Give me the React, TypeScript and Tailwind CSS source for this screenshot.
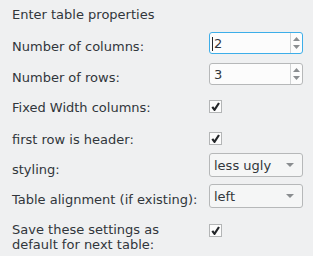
import React from "react";

function Check() {
  return (
    <div className="w-[13px] h-[13px] border border-[#b3b5b6] bg-[#fcfcfc] flex items-center justify-center">
      <svg width="9" height="9" viewBox="0 0 9 9">
        <path d="M1.3 4.8 L3.5 7.8 L8 1" stroke="#232629" strokeWidth="2.2" fill="none" strokeLinejoin="miter" />
      </svg>
    </div>
  );
}

function Spin({ value, focused }: { value: string; focused?: boolean }) {
  return (
    <div
      className={`w-[94px] h-[22px] rounded-[3px] border bg-[#fcfcfc] flex ${
        focused ? "border-[#3daee9]" : "border-[#b6b8b9]"
      }`}
    >
      <div className="flex-1 flex items-center pl-[4px] relative">
        {focused && <div className="absolute left-[2px] top-[4px] w-px h-[14px] bg-[#232629]" />}
        <span className="leading-[15px]">{value}</span>
      </div>
      <div className="w-[12px] border-l border-[#d0d2d3] flex flex-col items-center justify-center gap-[4px]">
        <svg width="7" height="4" viewBox="0 0 7 4">
          <path d="M0 4 L3.5 0 L7 4 Z" fill="#8a8d90" />
        </svg>
        <svg width="7" height="4" viewBox="0 0 7 4">
          <path d="M0 0 L3.5 4 L7 0 Z" fill="#8a8d90" />
        </svg>
      </div>
    </div>
  );
}

function Combo({ value }: { value: string }) {
  return (
    <div className="w-[94px] h-[24px] rounded-[3px] border border-[#b6b8b9] bg-[#f5f6f6] flex items-center pl-[4px] pr-[8px]">
      <span className="flex-1 leading-[15px]">{value}</span>
      <svg width="8" height="4" viewBox="0 0 8 4">
        <path d="M0 0 L4 4 L8 0 Z" fill="#8a8d90" />
      </svg>
    </div>
  );
}

export default function App() {
  return (
    <div
      className="w-[313px] h-[256px] bg-[#eff0f1] text-[#31363b] text-[13px] leading-[15px] pl-[12px] pt-[7px] overflow-hidden"
      style={{ fontFamily: '"DejaVu Sans", sans-serif' }}
    >
      <div>Enter table properties</div>
      <div className="mt-[10px] flex items-start">
        <div className="w-[197px] mt-[7px]">Number of columns:</div>
        <Spin value="2" focused />
      </div>
      <div className="mt-[9px] flex items-start">
        <div className="w-[197px] mt-[7px]">Number of rows:</div>
        <Spin value="3" />
      </div>
      <div className="mt-[15px] flex items-start">
        <div className="w-[197px]">Fixed Width columns:</div>
        <Check />
      </div>
      <div className="mt-[17px] flex items-start">
        <div className="w-[197px]">first row is header:</div>
        <Check />
      </div>
      <div className="mt-[6px] flex items-start">
        <div className="w-[197px] mt-[9px]">styling:</div>
        <Combo value="less ugly" />
      </div>
      <div className="mt-[7px] flex items-start">
        <div className="w-[197px] mt-[8px]">Table alignment (if existing):</div>
        <Combo value="left" />
      </div>
      <div className="mt-[14px] flex items-start">
        <div className="w-[197px]">
          Save these settings as
          <br />
          default for next table:
        </div>
        <div className="mt-[2px]">
          <Check />
        </div>
      </div>
    </div>
  );
}
